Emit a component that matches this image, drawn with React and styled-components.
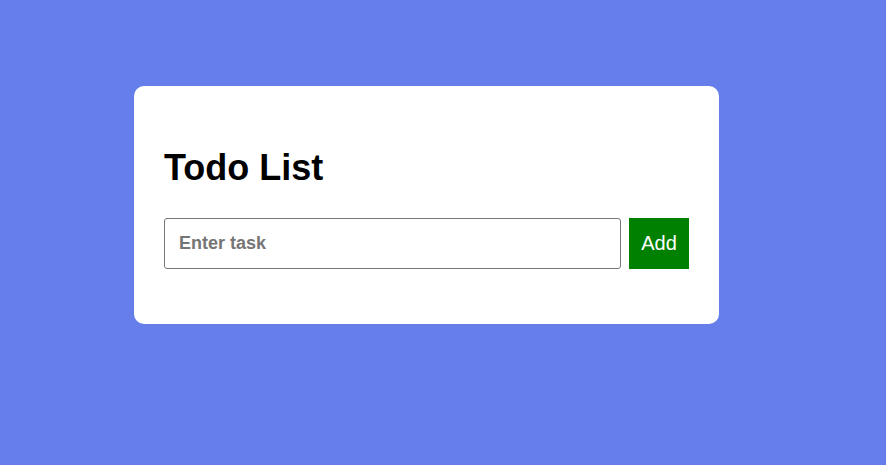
import React, { useState } from "react";
import styled, { createGlobalStyle } from "styled-components";

const GlobalStyle = createGlobalStyle`
  html, body {
    margin: 0;
    padding: 0;
    background: #667eea;
    font-family: "Liberation Sans", Arial, sans-serif;
  }
`;

const Page = styled.div`
  min-height: 465px;
  box-sizing: border-box;
  padding: 86px 0 0 134px;
  display: flex;
  align-items: flex-start;
`;

const Card = styled.div`
  width: 585px;
  box-sizing: border-box;
  background: #fff;
  border-radius: 10px;
  padding: 30px 30px 55px;
`;

const Title = styled.h1`
  margin: 32px 0 30px;
  font-size: 36px;
  line-height: 40px;
  font-weight: bold;
  color: #000;
`;

const Row = styled.div`
  display: flex;
  gap: 8px;
`;

const Input = styled.input`
  flex: 1;
  height: 51px;
  box-sizing: border-box;
  border: 1px solid #767676;
  border-radius: 3px;
  padding: 0 14px;
  font-family: "Liberation Sans", Arial, sans-serif;
  font-size: 18px;
  font-weight: bold;
  color: #000;
  outline: none;

  &::placeholder {
    color: #757575;
  }
`;

const AddButton = styled.button`
  width: 60px;
  height: 51px;
  border: none;
  background: green;
  color: #fff;
  font-family: "Liberation Sans", Arial, sans-serif;
  font-size: 20px;
  padding: 0;
  cursor: pointer;
`;

export default function App() {
  const [task, setTask] = useState("");

  return (
    <>
      <GlobalStyle />
      <Page>
        <Card>
          <Title>Todo List</Title>
          <Row>
            <Input
              value={task}
              placeholder="Enter task"
              onChange={(e) => setTask(e.target.value)}
            />
            <AddButton onClick={() => setTask("")}>Add</AddButton>
          </Row>
        </Card>
      </Page>
    </>
  );
}
